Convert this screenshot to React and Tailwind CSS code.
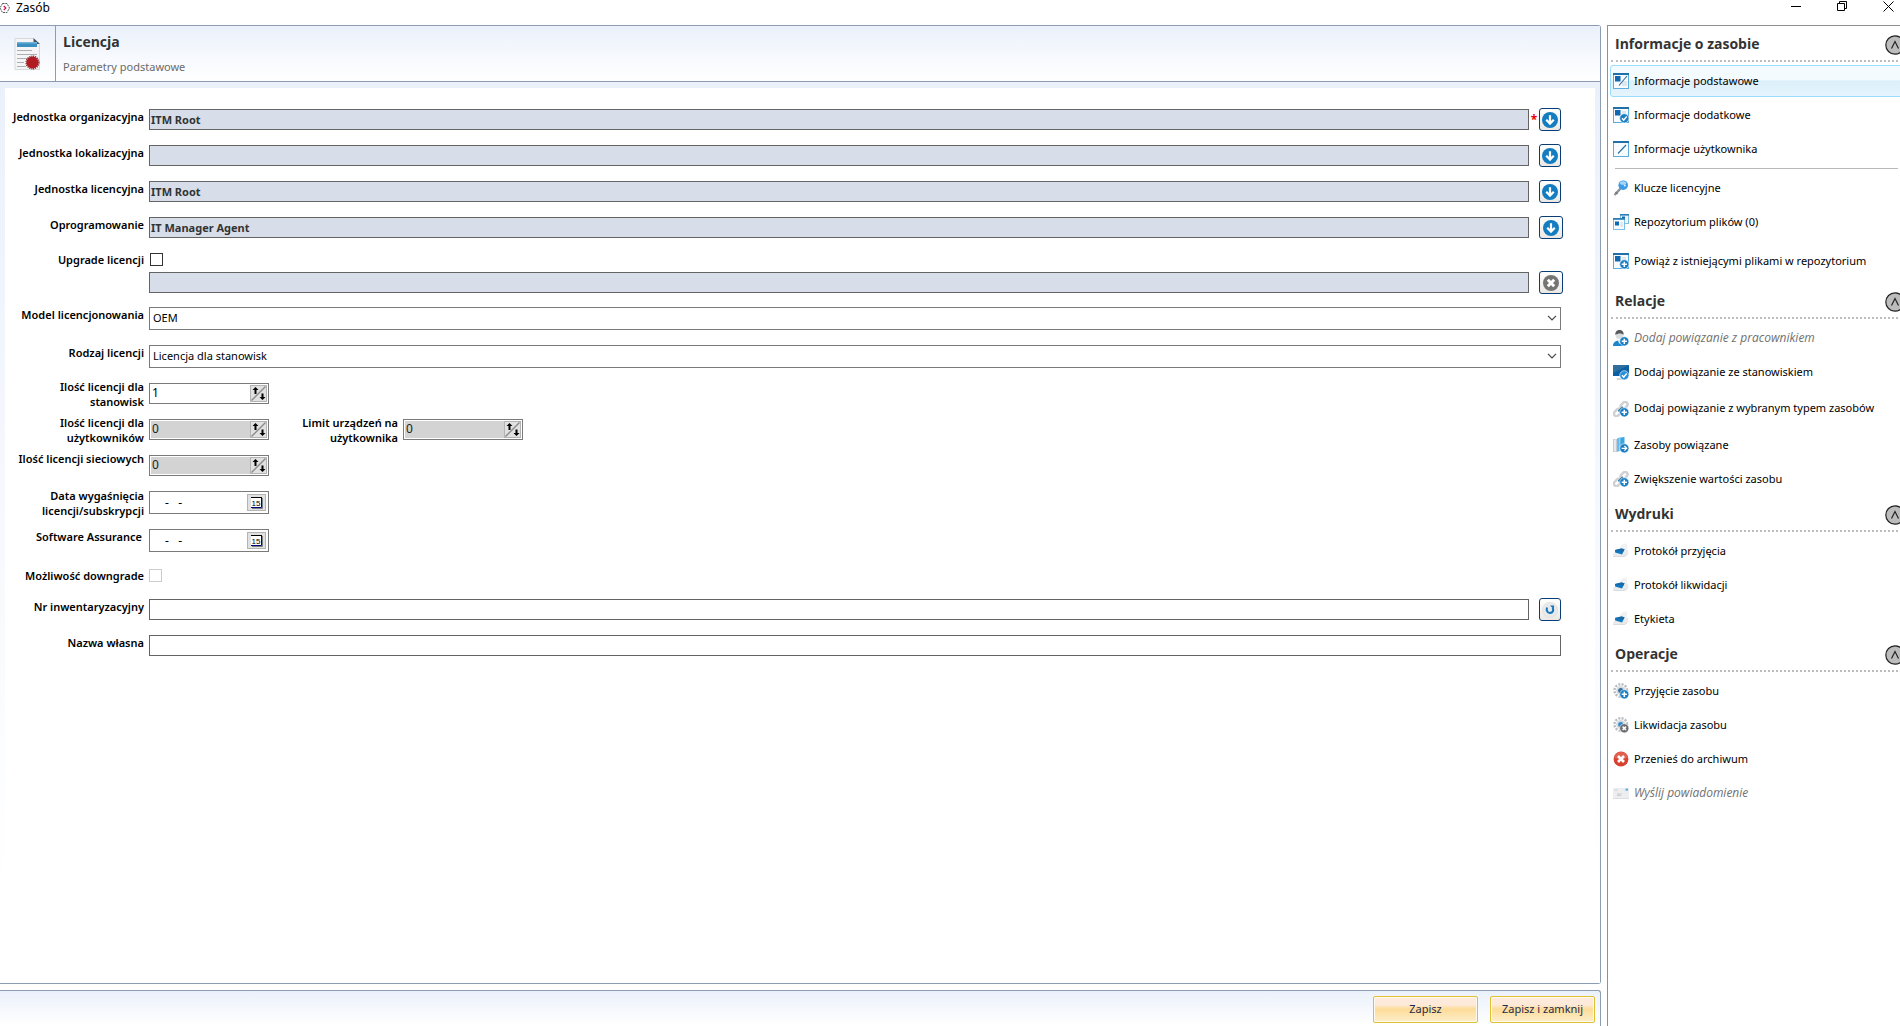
import React from "react";

/* ---------- small drawings ---------- */

const Svg = ({ children, className = "size-4" }) => (
  <svg viewBox="0 0 16 16" className={`shrink-0 ${className}`} aria-hidden="true">
    {children}
  </svg>
);

const Badge = ({ color = "#1b7ec2", kind }) => (
  <g>
    <circle cx="11.3" cy="11.3" r="4.6" fill={color} stroke="#fff" strokeWidth="0.6" />
    {kind === "plus" && <path d="M11.3 8.7v5.2M8.7 11.3h5.2" stroke="#fff" strokeWidth="1.5" />}
    {kind === "check" && <path d="M9 11.3l1.7 1.8 3-3.6" stroke="#fff" strokeWidth="1.4" fill="none" />}
    {kind === "x" && <path d="M9.6 9.6l3.4 3.4M13 9.6l-3.4 3.4" stroke="#fff" strokeWidth="1.5" />}
    {kind === "arrow" && <path d="M8.6 11.3h4.8M11.4 9l2.3 2.3-2.3 2.3" stroke="#fff" strokeWidth="1.3" fill="none" />}
  </g>
);

const WindowFrame = () => (
  <g>
    <rect x="0.5" y="0.5" width="15" height="15" fill="#f7fbfe" stroke="#5badde" />
    <rect x="0" y="0" width="16" height="2" fill="#1f6fa8" />
  </g>
);

const icons = {
  basic: (
    <Svg>
      <WindowFrame />
      <rect x="9" y="8" width="5" height="5" fill="#dfe6ec" />
      <rect x="2" y="3" width="5.5" height="5.5" fill="#0f68b0" />
      <path d="M6 12.5L14 3" stroke="#2a6d9e" strokeWidth="1.1" />
    </Svg>
  ),
  extra: (
    <Svg>
      <WindowFrame />
      <rect x="2" y="3" width="5.5" height="5.5" fill="#0f68b0" />
      <rect x="9" y="4" width="4" height="3" fill="#dfe6ec" />
      <Badge kind="check" />
    </Svg>
  ),
  user: (
    <Svg>
      <WindowFrame />
      <path d="M5 12.5L13 4" stroke="#2a6d9e" strokeWidth="1.1" />
    </Svg>
  ),
  key: (
    <Svg>
      <path d="M1.5 15L8.5 7.5" stroke="#8a9299" strokeWidth="2.4" />
      <path d="M2.5 12l2 2" stroke="#6f777e" strokeWidth="1.4" />
      <circle cx="10.2" cy="5.2" r="4.8" fill="#3c9be6" />
      <ellipse cx="10" cy="3" rx="3.2" ry="1.8" fill="#a6d6fa" />
      <circle cx="11.8" cy="5.4" r="1" fill="#dff0fd" />
    </Svg>
  ),
  repo: (
    <Svg>
      <rect x="7.5" y="0.5" width="8" height="9" fill="#eef6fc" stroke="#7cc0e8" />
      <rect x="7" y="0" width="9" height="1.6" fill="#2c7db5" />
      <rect x="9" y="2.5" width="3" height="3" fill="#0f68b0" />
      <rect x="0.5" y="4.5" width="11" height="11" fill="#f7fbfe" stroke="#7cc0e8" />
      <rect x="0" y="4" width="12" height="1.8" fill="#2c7db5" />
      <rect x="2" y="7.5" width="4" height="4" fill="#0f68b0" />
      <rect x="7.5" y="8" width="2.5" height="5" fill="#dfe6ec" />
    </Svg>
  ),
  attach: (
    <Svg>
      <WindowFrame />
      <rect x="2" y="3" width="5.5" height="5.5" fill="#0f68b0" />
      <rect x="9" y="4" width="4" height="3" fill="#dfe6ec" />
      <Badge kind="plus" />
    </Svg>
  ),
  person: (
    <Svg>
      <path d="M0 16c0-4 3-5.5 6.5-5.5s6 2 6 5.5z" fill="#1b86c9" />
      <path d="M4.5 10h4L6.500 14z" fill="#e8eef2" />
      <circle cx="6.5" cy="5.2" r="3.8" fill="#d9dcde" />
      <path d="M2.4 5C2 1.5 4 0 6.500 0S11 1.500 10.600 5C9 3 5 3 2.400 5z" fill="#555a5e" />
      <Badge kind="plus" />
    </Svg>
  ),
  monitor: (
    <Svg>
      <rect x="0" y="1" width="16" height="11" fill="#0b5fa5" />
      <path d="M0 1h16L0 9z" fill="#2f6f9e" />
      <path d="M4 15h7" stroke="#c9ced2" strokeWidth="1.5" />
      <Badge kind="check" color="#2a8fd6" />
    </Svg>
  ),
  chain: (
    <Svg>
      <g fill="none" stroke="#cfd1d3" strokeWidth="2.4">
        <rect x="7" y="2" width="8" height="5" rx="2.5" transform="rotate(-45 11 4.5)" />
        <rect x="0.5" y="9" width="8" height="5" rx="2.5" transform="rotate(-45 4.5 11.500)" />
      </g>
      <path d="M5.5 10.5L10 6" stroke="#2477ad" strokeWidth="2" />
      <Badge kind="plus" />
    </Svg>
  ),
  linked: (
    <Svg>
      <rect x="0" y="2" width="5" height="13" fill="#c3ccd2" />
      <rect x="1.2" y="2.5" width="1.5" height="12" fill="#f0f4f6" />
      <path d="M4.5 1l7-1v13l-7 1.500z" fill="#3ba5e2" />
      <path d="M5.5 1l2-.3v13l-2 .5z" fill="#8fcdf1" />
      <Badge kind="arrow" />
    </Svg>
  ),
  printer: (
    <Svg>
      <path d="M6 5l4-4 4-.5V9l-8 2z" fill="#f0f1f2" />
      <path d="M0 11l5-3 10-1 .5 4-4 3-11-.3z" fill="#e9ebec" />
      <path d="M2 7l6.500-1.500 3 .700-2.400 5.300-7-2z" fill="#0f78c0" />
      <path d="M2 7l6.500-1.500 3 .700-1 2.300-8.500-1z" fill="#1c69a4" />
      <path d="M0 13.500h11l3-1.500" stroke="#d3d6d8" fill="none" strokeWidth="0.7" />
    </Svg>
  ),
  gearPlus: (
    <Svg>
      <circle cx="7.8" cy="7.5" r="6.3" fill="none" stroke="#b9bdc0" strokeWidth="2.4" strokeDasharray="2 1.3" />
      <circle cx="7.8" cy="7.5" r="4.6" fill="#d7dadc" />
      <circle cx="7.8" cy="7.5" r="2.6" fill="#2f6f9e" />
      <Badge kind="plus" />
    </Svg>
  ),
  gearX: (
    <Svg>
      <circle cx="7.8" cy="7.5" r="6.3" fill="none" stroke="#b9bdc0" strokeWidth="2.4" strokeDasharray="2 1.3" />
      <circle cx="7.8" cy="7.5" r="4.6" fill="#d7dadc" />
      <circle cx="7.8" cy="7.5" r="2.6" fill="#2b8fd0" />
      <Badge kind="x" color="#6c6e70" />
    </Svg>
  ),
  archive: (
    <Svg>
      <circle cx="8" cy="8" r="7.4" fill="#d8412f" />
      <path d="M1 6.500a7.200 7.200 0 0 1 14 0C11 9 5 9 1 6.500z" fill="#e2604f" />
      <path d="M5 5l6 6M11 5l-6 6" stroke="#fff" strokeWidth="2.7" />
    </Svg>
  ),
  mail: (
    <Svg>
      <rect x="0" y="3" width="16" height="10.5" fill="#eceeef" />
      <path d="M0 13.500h16" stroke="#d5d8da" strokeWidth="0.8" />
      <rect x="12.5" y="3.5" width="2.5" height="2.2" fill="#5fb0e0" />
      <path d="M4 9h5M4 10.500h4M1.500 5h3" stroke="#bfc4c7" strokeWidth="0.8" />
    </Svg>
  ),
};

const DocumentIcon = () => (
  <svg viewBox="0 0 26 32" className="h-8 w-[26px]" aria-hidden="true">
    <path d="M1 0.500h18.500l6 6v25H1z" fill="#f5f5f5" stroke="#d6d9dc" />
    <path d="M19.500 0v6H26z" fill="#4b545c" />
    <rect x="3" y="4" width="20" height="5" fill="#3a8fc0" />
    <rect x="3" y="4" width="20" height="1.5" fill="#6fb3da" />
    <path d="M3 12.500h15M3 16.500h20M3 20.500h12M3 24.500h7M3 28.500h9" stroke="#aab0b5" />
    <circle cx="18.5" cy="24.5" r="6" fill="#b01c22" />
    <circle cx="18.5" cy="24.5" r="6.4" fill="none" stroke="#8f1a1f" strokeWidth="1.2" strokeDasharray="1.2 0.8" />
  </svg>
);

const ArrowCircle = () => (
  <Svg>
    <circle cx="8" cy="8" r="8" fill="#137dc0" />
    <path d="M8 3.300v8M4.200 7.800L8 11.600l3.800-3.800" stroke="#fff" strokeWidth="2.2" fill="none" />
  </Svg>
);

const CloseCircle = () => (
  <Svg>
    <circle cx="8" cy="8" r="8" fill="#757575" />
    <path d="M4.800 4.800l6.400 6.400M11.200 4.800l-6.400 6.400" stroke="#fff" strokeWidth="2.9" />
  </Svg>
);

const ResetCircle = () => (
  <Svg>
    <circle cx="8" cy="8" r="7.6" fill="#e9e9ea" stroke="#dcdcdc" strokeWidth="0.6" />
    <path d="M5 5.500C4.300 8 5 11 8 11s3.800-3 2.600-5" stroke="#1476bd" strokeWidth="2" fill="none" />
    <path d="M8 3.600h4v3.800z" fill="#1476bd" />
  </Svg>
);

/* ---------- form parts ---------- */

const LABEL = "w-36 shrink-0 text-right text-[11px] leading-[15px] font-semibold text-black";
const CHECK_LABEL = "w-36 shrink-0 text-right text-[11px] leading-[13px] font-semibold text-black";
const TALL_LABEL = "w-36 shrink-0 h-[30px] text-right text-[11px] leading-[15px] font-semibold text-black";

function FieldButton({ label, wide, children }) {
  return (
    <button
      type="button"
      aria-label={label}
      className={`flex h-[23px] shrink-0 items-center justify-center rounded-[3px] border border-[#0a3c78] bg-linear-to-b from-white to-[#ece9e4] ${wide ? "w-6" : "w-[22px]"}`}
    >
      {children}
    </button>
  );
}

function UnitRow({ id, label, value, required, wide }) {
  return (
    <div className="flex h-9 items-start gap-[5px]">
      <label htmlFor={id} className={LABEL}>{label}</label>
      <div className="flex h-[21px] flex-1 items-center">
        <input
          id={id}
          readOnly
          defaultValue={value}
          className="h-[21px] min-w-0 flex-1 border border-[#646464] bg-[#d7dee9] px-px text-[11px] font-bold text-[#333]"
        />
        <span className="w-[10px] shrink-0 text-center text-[12px] font-bold text-red-600">{required ? "*" : ""}</span>
        <span className="flex w-[22px] shrink-0">
          <FieldButton label={`Wybierz: ${label}`} wide={wide}><ArrowCircle /></FieldButton>
        </span>
      </div>
    </div>
  );
}

function SelectRow({ id, label, value }) {
  return (
    <div className="flex h-[38px] items-start gap-[5px]">
      <label htmlFor={id} className={LABEL}>{label}</label>
      <div className="relative flex-1">
        <select
          id={id}
          defaultValue={value}
          className="block h-[23px] w-full appearance-none border border-[#7a7a7a] bg-white px-[3px] text-[11px] text-black"
        >
          <option>{value}</option>
        </select>
        <svg viewBox="0 0 10 6" className="pointer-events-none absolute top-2 right-1 h-1.5 w-2.5" aria-hidden="true">
          <path d="M1 0.800l4 4 4-4" stroke="#444" fill="none" strokeWidth="1.2" />
        </svg>
      </div>
    </div>
  );
}

function Spinner({ id, value, disabled }) {
  return (
    <div className={`flex h-[21px] w-[120px] shrink-0 items-center border border-[#7a7a7a] bg-white p-px ${disabled ? "text-[#222]" : "text-black"}`}>
      <input
        id={id}
        defaultValue={value}
        disabled={disabled}
        className={`h-full min-w-0 flex-1 px-px pb-[3px] text-[12px] ${disabled ? "bg-[#d3d3d3]" : "bg-white"}`}
      />
      <button type="button" aria-label="Zmień wartość" disabled={disabled} className="size-[17px] shrink-0 border border-[#b4b4b4] bg-[#e1e1e1]">
        <svg viewBox="0 0 15 15" className="size-[15px]" aria-hidden="true">
          <path d="M0.500 14.500l14-14" stroke="#8c8c8c" strokeWidth="1.4" />
          <path d="M4.500 1l3 3h-2v4h-2V4h-2zM11.500 14l-3-3h2V7.500h2V11h2z" fill="#000" />
        </svg>
      </button>
    </div>
  );
}

function DateRow({ id, label, height, tall }) {
  return (
    <div className={`flex items-start gap-[5px] ${height}`}>
      <div className="flex h-[23px] items-center">
        <label htmlFor={id} className={tall ? `${TALL_LABEL} pl-6` : `${LABEL} h-[23px] pr-0.5`}>{label}</label>
      </div>
      <div className="flex h-[23px] w-[120px] items-center border border-[#7a7a7a] bg-white pr-0.5">
        <input id={id} defaultValue="-   -" className="h-full min-w-0 flex-1 pl-[15px] text-[12px] text-black" />
        <button type="button" aria-label="Kalendarz" className="flex h-[17px] w-[19px] shrink-0 items-center justify-center border border-[#b4b4b4] bg-[#e1e1e1]">
          <svg viewBox="0 0 12 12" className="size-3" aria-hidden="true">
            <path d="M1 11.500h10.500V1" stroke="#808080" fill="none" />
            <rect x="0" y="0" width="11" height="11" fill="#fff" />
            <path d="M0 10.500h10.500V1" stroke="#000080" fill="none" />
            <path d="M0 0.500h11" stroke="#000" />
            <text x="0.5" y="8.5" fontSize="8" fontFamily="Liberation Sans, sans-serif" fill="#000">15</text>
          </svg>
        </button>
      </div>
    </div>
  );
}

/* ---------- sidebar ---------- */

const sections = [
  {
    title: "Informacje o zasobie",
    items: [
      { icon: "basic", text: "Informacje podstawowe", active: true },
      { icon: "extra", text: "Informacje dodatkowe" },
      { icon: "user", text: "Informacje użytkownika", rule: true },
      { icon: "key", text: "Klucze licencyjne" },
      { icon: "repo", text: "Repozytorium plików (0)" },
      { icon: "attach", text: "Powiąż z istniejącymi plikami w repozytorium", size: "h-11" },
    ],
  },
  {
    title: "Relacje",
    items: [
      { icon: "person", text: "Dodaj powiązanie z pracownikiem", off: true },
      { icon: "monitor", text: "Dodaj powiązanie ze stanowiskiem" },
      { icon: "chain", text: "Dodaj powiązanie z wybranym typem zasobów", size: "h-[39px]" },
      { icon: "linked", text: "Zasoby powiązane" },
      { icon: "chain", text: "Zwiększenie wartości zasobu" },
    ],
  },
  {
    title: "Wydruki",
    items: [
      { icon: "printer", text: "Protokół przyjęcia" },
      { icon: "printer", text: "Protokół likwidacji" },
      { icon: "printer", text: "Etykieta" },
    ],
  },
  {
    title: "Operacje",
    items: [
      { icon: "gearPlus", text: "Przyjęcie zasobu" },
      { icon: "gearX", text: "Likwidacja zasobu" },
      { icon: "archive", text: "Przenieś do archiwum" },
      { icon: "mail", text: "Wyślij powiadomienie", off: true },
    ],
  },
];

function SideItem({ item }) {
  return (
    <li>
      <div className={`flex items-center pl-0.5 ${item.size || "h-[34px]"}`}>
        <button
          type="button"
          disabled={item.off}
          className={`flex h-8 w-full items-center gap-[5px] rounded-[3px] border pl-0.5 text-left whitespace-nowrap ${
            item.active ? "border-[#99defd] bg-linear-to-b from-[#f4fbfe] from-45% via-[#dceffa] via-50% to-[#e6f5fd]" : "border-transparent"
          } ${item.off ? "font-['Open_Sans',sans-serif] text-[12px] text-[#707070] italic" : "text-[11px] text-black"}`}
        >
          {icons[item.icon]}
          {item.text}
        </button>
      </div>
      {item.rule && <hr className="mt-0.5 mr-3 mb-0.5 ml-[7px] border-[#b9b9b9]" />}
    </li>
  );
}

function Sidebar() {
  return (
    <aside className="w-[293px] shrink-0 overflow-hidden border-t border-l border-[#909090] bg-white">
      <div className="w-[302px]">
        {sections.map((s) => (
          <section key={s.title}>
            <div className="ml-[3px] h-[38px]">
              <div className="flex h-9 items-center justify-between border-b-2 border-dotted border-[#bdbdbd] pt-1 pr-[5px] pl-1">
                <h2 className="h-5 font-['Open_Sans',sans-serif] text-[14px] leading-[18px] font-bold text-[#333]">{s.title}</h2>
                <button type="button" aria-label={`Zwiń: ${s.title}`} className="size-5">
                  <svg viewBox="0 0 20 20" className="size-5" aria-hidden="true">
                    <circle cx="10" cy="10" r="9.2" fill="#bcbcbc" stroke="#222" strokeWidth="1.2" />
                    <path d="M6.500 13.500L10 6.500l3.500 7" stroke="#222" fill="none" strokeWidth="1.2" />
                  </svg>
                </button>
              </div>
            </div>
            <ul>
              {s.items.map((i) => (
                <SideItem key={i.text} item={i} />
              ))}
            </ul>
          </section>
        ))}
      </div>
    </aside>
  );
}

/* ---------- window ---------- */

function TitleBar() {
  return (
    <header className="flex h-[25px] shrink-0 items-start justify-between">
      <div className="flex h-4 items-center gap-1.5">
        <svg viewBox="0 0 10 12" className="h-3 w-2.5" aria-hidden="true">
          <path d="M2.500 1.500h4.500l2.500 4.500-2.500 4.500H2.500L0 6z" fill="none" stroke="#555" strokeDasharray="2 0.8" />
          <path d="M3.800 4l2 2-2 2" fill="none" stroke="#c2185b" strokeWidth="1.2" />
        </svg>
        <h1 className="text-[12px] leading-4 text-black">Zasób</h1>
      </div>
      <div className="flex gap-[35px] pt-px pr-[6px]">
        <button type="button" aria-label="Minimalizuj" className="size-[11px]">
          <svg viewBox="0 0 11 11" className="size-[11px]"><path d="M0 5.500h10" stroke="#000" /></svg>
        </button>
        <button type="button" aria-label="Przywróć" className="size-[11px]">
          <svg viewBox="0 0 11 11" className="size-[11px]"><path d="M0.500 2.500h7v7h-7zM2.500 2.500v-2h7v7h-2" stroke="#000" fill="none" /></svg>
        </button>
        <button type="button" aria-label="Zamknij" className="size-[11px]">
          <svg viewBox="0 0 11 11" className="size-[11px]"><path d="M0.500 0.500l10 10M10.500 0.500l-10 10" stroke="#000" fill="none" /></svg>
        </button>
      </div>
    </header>
  );
}

const SAVE =
  "h-[27px] w-[105px] rounded-[2px] border border-[#dfc032] bg-linear-to-b from-[#fdf1ea] from-0% via-[#fddc9a] via-50% to-[#fdeecb] text-[11px] text-[#1e2a4a] shadow-[inset_0_0_0_1px_#fffaf0,inset_0_10px_3px_-1px_#fdeadb]";

export default function App() {
  return (
    <div className="flex h-screen flex-col overflow-hidden bg-white font-['Noto_Sans','Open_Sans',sans-serif]">
      <TitleBar />
      <div className="flex min-h-0 flex-1 gap-1.5">
        <main className="flex min-w-0 flex-1 flex-col gap-1.5">
          <section className="flex min-h-0 flex-1 flex-col rounded-r-[3px] border-y border-r border-[#8c9cb2]">
            <div className="flex h-14 shrink-0 border-b border-[#8c9cb2] bg-linear-to-b from-[#ebf1fb] to-white">
              <div className="flex w-14 shrink-0 items-center justify-end border-r border-[#8c9cb2] pr-[15px]">
                <DocumentIcon />
              </div>
              <div className="flex flex-col gap-2 pt-1.5 pl-[7px]">
                <h2 className="font-['Open_Sans',sans-serif] text-[14px] leading-5 font-bold text-[#333]">Licencja</h2>
                <p className="text-[11px] leading-[14px] text-[#6b6b6b]">Parametry podstawowe</p>
              </div>
            </div>
            <div className="min-h-0 flex-1 bg-linear-to-b from-[#ebf1fb] to-white to-90% px-[5px] pt-1.5">
              <form className="h-full bg-white pt-[21px] pr-[34px]">
                <div className="-ml-[5px]">
                  <UnitRow id="org" label="Jednostka organizacyjna" value="ITM Root" required />
                  <UnitRow id="lok" label="Jednostka lokalizacyjna" value="" />
                  <UnitRow id="lic" label="Jednostka licencyjna" value="ITM Root" />
                  <UnitRow id="opr" label="Oprogramowanie" value="IT Manager Agent" wide />
                  <div className="flex h-[19px] items-start gap-1.5">
                    <label htmlFor="upg" className={CHECK_LABEL}>Upgrade licencji</label>
                    <input id="upg" type="checkbox" className="size-[13px] appearance-none border border-[#333] bg-white" />
                  </div>
                  <div className="flex h-[35px] items-start gap-[5px]">
                    <span className="w-36 shrink-0" />
                    <div className="flex h-[21px] flex-1 items-center gap-[10px]">
                      <input readOnly aria-label="Licencja do upgrade" className="h-[21px] min-w-0 flex-1 border border-[#646464] bg-[#d7dee9]" />
                      <span className="flex w-[22px] shrink-0">
                        <FieldButton label="Wyczyść" wide><CloseCircle /></FieldButton>
                      </span>
                    </div>
                  </div>
                  <SelectRow id="model" label="Model licencjonowania" value="OEM" />
                  <SelectRow id="rodzaj" label="Rodzaj licencji" value="Licencja dla stanowisk" />
                  <div className="flex h-9 items-start">
                    <div className="flex h-[21px] items-center gap-[5px]">
                      <label htmlFor="st" className={`${TALL_LABEL} pl-12`}>Ilość licencji dla stanowisk</label>
                      <Spinner id="st" value="1" />
                    </div>
                  </div>
                  <div className="flex h-9 items-start">
                    <div className="flex h-[21px] items-center gap-[5px]">
                      <label htmlFor="uz" className={`${TALL_LABEL} pl-12`}>Ilość licencji dla użytkowników</label>
                      <Spinner id="uz" value="0" disabled />
                      <label htmlFor="lim" className={`${TALL_LABEL} w-[124px]! pl-5`}>Limit urządzeń na użytkownika</label>
                      <Spinner id="lim" value="0" disabled />
                    </div>
                  </div>
                  <div className="flex h-9 items-start">
                    <div className="flex h-[21px] items-center gap-[5px]">
                      <label htmlFor="sie" className={TALL_LABEL}>Ilość licencji sieciowych</label>
                      <Spinner id="sie" value="0" disabled />
                    </div>
                  </div>
                  <DateRow id="wyg" label="Data wygaśnięcia licencji/subskrypcji" height="h-[38px]" tall />
                  <DateRow id="sa" label="Software Assurance" height="h-10" />
                  <div className="flex h-[30px] items-start gap-[5px]">
                    <label htmlFor="dg" className={CHECK_LABEL}>Możliwość downgrade</label>
                    <input id="dg" type="checkbox" disabled className="size-[13px] appearance-none border border-[#ccc] bg-white" />
                  </div>
                  <div className="flex h-9 items-start gap-[5px]">
                    <label htmlFor="nr" className={LABEL}>Nr inwentaryzacyjny</label>
                    <div className="flex h-[21px] flex-1 items-center gap-[10px]">
                      <input id="nr" className="h-[21px] min-w-0 flex-1 border border-[#646464] bg-white px-0.5 text-[11px]" />
                      <FieldButton label="Generuj numer"><ResetCircle /></FieldButton>
                    </div>
                  </div>
                  <div className="flex h-9 items-start gap-[5px]">
                    <label htmlFor="nazwa" className={LABEL}>Nazwa własna</label>
                    <input id="nazwa" className="h-[21px] min-w-0 flex-1 border border-[#646464] bg-white px-0.5 text-[11px]" />
                  </div>
                </div>
              </form>
            </div>
          </section>
          <footer className="flex h-9 shrink-0 items-start justify-end gap-3 rounded-tr-[3px] border-t border-r border-[#8c9cb2] bg-linear-to-b from-[#ebf1fb] to-white pt-[5px] pr-[5px]">
            <button type="button" className={SAVE}>Zapisz</button>
            <button type="button" className={SAVE}>Zapisz i zamknij</button>
          </footer>
        </main>
        <Sidebar />
      </div>
    </div>
  );
}
